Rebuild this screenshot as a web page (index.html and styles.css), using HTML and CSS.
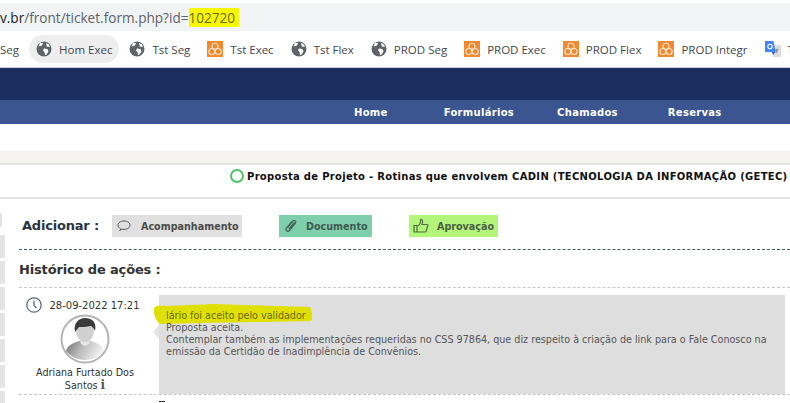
FILE: index.html
```html
<!DOCTYPE html>
<html lang="en">
<head>
  <meta charset="UTF-8">
  <title>Ticket 102720</title>
  <link rel="stylesheet" href="styles.css">
</head>
<body>
  <svg class="defs" width="0" height="0">
    <symbol id="globe" viewBox="0 0 16 16">
      <circle cx="8" cy="8" r="7.5" fill="#5f6368"/>
      <path d="M2.500 5.500 6 4.500l1-2.500-3-.2zM8 7.500l3.500.5 1 2.500-2 3-1.500.5-.5-3-1.500-1.500zM10 2l3 1.500.8 2.500-3-.5z" fill="#fff"/>
    </symbol>
    <symbol id="flower" viewBox="0 0 16 16">
      <rect width="16" height="16" fill="#ef8a32"/>
      <g fill="none" stroke="#fde3c8" stroke-width="1.100">
        <circle cx="8" cy="5.200" r="3"/>
        <circle cx="4.800" cy="10.500" r="3"/>
        <circle cx="11.200" cy="10.500" r="3"/>
      </g>
    </symbol>
  </svg>

  <div class="address-bar">
    <span class="url"><span class="url-host">v.br</span>/front/ticket.form.php?id=<span class="url-mark">102720&nbsp;</span></span>
  </div>

  <div class="bookmarks">
    <div class="bookmark bookmark-cut">Seg</div>
    <div class="bookmark bookmark-active"><svg class="fav"><use href="#globe"/></svg>Hom Exec</div>
    <div class="bookmark"><svg class="fav"><use href="#globe"/></svg>Tst Seg</div>
    <div class="bookmark"><svg class="fav"><use href="#flower"/></svg>Tst Exec</div>
    <div class="bookmark"><svg class="fav"><use href="#globe"/></svg>Tst Flex</div>
    <div class="bookmark"><svg class="fav"><use href="#globe"/></svg>PROD Seg</div>
    <div class="bookmark"><svg class="fav"><use href="#flower"/></svg>PROD Exec</div>
    <div class="bookmark"><svg class="fav"><use href="#flower"/></svg>PROD Flex</div>
    <div class="bookmark"><svg class="fav"><use href="#flower"/></svg>PROD Integr</div>
    <div class="bookmark">
      <svg class="fav" viewBox="0 0 16 16">
        <path d="M7 4h9v12H8z" fill="#dcdcdc"/>
        <path d="M9.500 8h4l-2 4.500z" fill="#8a8f96"/>
        <path d="M0 0h8.500l2 11H0z" fill="#4285f4"/>
        <path d="M7 11h3.500L8 14z" fill="#2a56c6"/>
        <circle cx="5" cy="5.500" r="2.200" fill="none" stroke="#fff" stroke-width="1.100"/>
      </svg>T
    </div>
  </div>

  <div class="brand-bar"></div>

  <nav class="site-nav">
    <a class="nav-home">Home</a>
    <a class="nav-forms">Formulários</a>
    <a class="nav-tickets">Chamados</a>
    <a>Reservas</a>
  </nav>

  <div class="band"></div>

  <div class="ticket-title">
    <span class="status-dot"></span>
    <span class="ticket-name">Proposta de Projeto - Rotinas que envolvem CADIN (TECNOLOGIA DA INFORMAÇÃO (GETEC)</span>
  </div>

  <div class="ticket-body">
    <div class="rail">
      <div class="rail-top"></div>
      <div class="rail-tab"></div>
      <div class="rail-tab"></div>
      <div class="rail-tab"></div>
      <div class="rail-tab"></div>
      <div class="rail-tab"></div>
      <div class="rail-tab"></div>
      <div class="rail-tab"></div>
    </div>

    <div class="ticket-main">
      <div class="add-row">
        <span class="add-label">Adicionar :</span>
        <a class="add-btn btn-followup">
          <svg class="btn-icon" viewBox="0 0 16 16">
            <path d="M3.500 12.500c.9-.5 1.200-1 1.300-1.500C3 10 2 8.700 2 7.200 2 4.800 4.600 3 8 3s6 1.800 6 4.200-2.600 4.200-6 4.200c-.8 0-1.500-.1-2.200-.3-.6.6-1.400 1.100-2.300 1.400z" fill="none" stroke="#555" stroke-width="1"/>
          </svg>
          Acompanhamento
        </a>
        <a class="add-btn btn-document">
          <svg class="btn-icon" viewBox="0 0 16 16">
            <path d="M4.500 9.500 10 3c1.200-1.400 3.600.3 2.500 2l-6 7.500c-1.700 2-4.700-.2-3.200-2.300L9 3.500M6 11l5.500-6.500" fill="none" stroke="#44695a" stroke-width="1.300"/>
          </svg>
          Documento
        </a>
        <a class="add-btn btn-approval">
          <svg class="btn-icon" viewBox="0 0 16 16">
            <path d="M1 7.500h3V14H1zM4 8c2 0 3.500-2.500 3.500-4.500S7.700 1 8.500 1.500c1.500.8 1 3.500.5 5h5c1 0 1.200 1.200.5 2l-1.500 5c-.3.5-.6.5-1 .5H4" fill="none" stroke="#4f6b45" stroke-width="1.200"/>
          </svg>
          Aprovação
        </a>
      </div>

      <h2 class="history-title">Histórico de ações :</h2>

      <div class="event">
        <div class="event-meta">
          <div class="event-date">
            <svg class="clock" viewBox="0 0 16 16">
              <circle cx="8" cy="8" r="7.200" fill="none" stroke="#5d6b7a" stroke-width="1.300"/>
              <path d="M8 3.500V8.500l2.500 2.500" fill="none" stroke="#5d6b7a" stroke-width="1.300"/>
            </svg>
            28-09-2022 17:21
          </div>
          <svg class="avatar" viewBox="0 0 50 50">
            <defs>
              <linearGradient id="shirt" x1="0" y1="0" x2="1" y2="0.300">
                <stop offset="0" stop-color="#6f6f6f"/>
                <stop offset="0.500" stop-color="#bdbdbd"/>
                <stop offset="1" stop-color="#f0f0f0"/>
              </linearGradient>
            </defs>
            <circle cx="25" cy="25" r="23.500" fill="#fff" stroke="#b4b4b4" stroke-width="2"/>
            <path d="M6 37c1-6 8-8 13-10h12c5 2 12 4 13 10-4 5-11 9-19 9S10 42 6 37z" fill="url(#shirt)"/>
            <path d="M20 26h10l-1 4-4 2-4-2z" fill="#e6e6e6"/>
            <ellipse cx="25" cy="17" rx="9" ry="11" fill="#d0d0d0"/>
            <path d="M15 18C13 9 19 4 25 4s12 3 10 13c-1-2-2-4-4-5-4 1-10 1-12 1-1 2-3 3-4 5z" fill="#3a3a3a"/>
          </svg>
          <div class="event-author">Adriana Furtado Dos<br>Santos <span class="info-icon">i</span></div>
        </div>
        <div class="event-content">
          <svg class="marker" viewBox="0 0 160 21">
            <path d="M1 5C3 2 8 2 14 3L60 1l60 2 37 1c2 4 3 10 1 14l-50 1-60 1-40 1C4 20 0 12 1 5z" fill="#e0e000"/>
          </svg>
          <div class="event-text">
            <div class="event-mark">lário foi aceito pelo validador</div>
            Proposta aceita.<br>
            Contemplar também as implementações requeridas no CSS 97864, que diz respeito à criação de link para o Fale Conosco na<br>
            emissão da Certidão de Inadimplência de Convênios.
          </div>
        </div>
      </div>
      <div class="next-event"><span class="next-tick"></span></div>
    </div>
  </div>
</body>
</html>
```

FILE: styles.css
```css
html, body {
  margin: 0;
  padding: 0;
  height: 403px;
  overflow: hidden;
  background: white;
}
body {
  font-family: "DejaVu Sans", sans-serif;
  font-size: 10px;
  color: #333;
}
.defs {
  display: block;
  height: 0;
}
.address-bar {
  margin-top: 3px;
  height: 28px;
  background: #f1f3f4;
  display: flex;
  align-items: center;
  font-family: "Open Sans", sans-serif;
  font-size: 13.6px;
  color: #5f6368;
  white-space: nowrap;
}
.url-host {
  color: #202124;
}
.url-mark {
  background: #f7f700;
  color: #6d6d14;
}
.bookmarks {
  height: 36px;
  display: flex;
  align-items: center;
  gap: 3px;
  font-family: "Open Sans", sans-serif;
  font-size: 11.5px;
  color: #44474c;
  white-space: nowrap;
  overflow: hidden;
  border-bottom: 1px solid #ccd0d6;
}
.bookmark {
  flex: none;
  display: flex;
  align-items: center;
  gap: 7px;
  height: 28px;
  padding: 0 7px;
  border-radius: 14px;
}
.bookmark-cut {
  width: 26px;
  padding: 0;
  box-sizing: border-box;
}
.bookmark-active {
  background: #eeeeef;
}
.fav {
  width: 16px;
  height: 16px;
  flex: none;
}
.brand-bar {
  height: 32px;
  background: #1c2d5f;
}
.site-nav {
  height: 24px;
  background: #3b5591;
  padding-left: 354px;
  display: flex;
  align-items: center;
  font-size: 10px;
  font-weight: bold;
  letter-spacing: 0.3px;
  color: white;
}
.nav-home { margin-right: 56px; }
.nav-forms { margin-right: 43px; }
.nav-tickets { margin-right: 50px; }
.band {
  margin-top: 27px;
  height: 12px;
  background: #f5f4f0;
  border-bottom: 2px solid #e4e4e4;
}
.ticket-title {
  height: 22px;
  padding: 0 0 10px 230px;
  display: flex;
  align-items: center;
  gap: 3px;
  border-bottom: 2px solid #e4e4e4;
  white-space: nowrap;
  font-size: 10px;
  font-weight: bold;
  letter-spacing: 0.3px;
  color: #111;
}
.status-dot {
  width: 10px;
  height: 10px;
  border: 2px solid #4cc46a;
  border-radius: 50%;
  flex: none;
}
.ticket-body {
  display: flex;
}
.rail {
  width: 5px;
  flex: none;
  padding-top: 14px;
  display: flex;
  flex-direction: column;
  gap: 3px;
}
.rail-top {
  width: 2px;
  height: 14px;
  margin-bottom: 5px;
  background: #e4e4e4;
  border-radius: 0 7px 7px 0;
}
.rail-tab {
  height: 23px;
  background: #e4e4e4;
}
.ticket-main {
  flex: 1;
  margin-left: 14px;
  min-width: 0;
}
.add-row {
  height: 51px;
  padding: 16px 0 0 3px;
  box-sizing: border-box;
  display: flex;
  align-items: flex-start;
  border-bottom: 1px dashed #46586e;
}
.add-label {
  width: 90px;
  line-height: 22px;
  font-size: 13px;
  font-weight: bold;
  letter-spacing: -0.2px;
  color: #2b3340;
}
.add-btn {
  height: 22px;
  display: flex;
  align-items: center;
  font-size: 9.6px;
  font-weight: bold;
  color: #4a4a4a;
  white-space: nowrap;
}
.btn-followup {
  width: 130px;
  margin-right: 37px;
  background: #e0e0e0;
}
.btn-document {
  width: 93px;
  margin-right: 37px;
  background: #80cfac;
  color: #3e5a50;
}
.btn-approval {
  width: 89px;
  background: #b3f57a;
  color: #4c5f46;
}
.btn-icon {
  width: 16px;
  height: 16px;
  margin: 0 9px 0 4px;
  flex: none;
}
.btn-document .btn-icon { margin-right: 7px; }
.btn-approval .btn-icon { margin-right: 8px; }
.history-title {
  margin: 0;
  height: 37px;
  line-height: 40px;
  font-size: 13px;
  font-weight: bold;
  letter-spacing: -0.15px;
  color: #333;
  border-bottom: 1px dashed #c8c8c8;
}
.event {
  height: 107px;
  padding-top: 7px;
  box-sizing: border-box;
  display: flex;
  border-bottom: 1px dashed #c8c8c8;
}
.event-meta {
  width: 132px;
  margin-right: 8px;
  flex: none;
  display: flex;
  flex-direction: column;
  align-items: center;
  text-align: center;
}
.event-date {
  display: flex;
  align-items: center;
  gap: 7px;
  margin-right: 4px;
  height: 18px;
  margin-top: 1px;
  white-space: nowrap;
}
.clock {
  width: 16px;
  height: 16px;
}
.avatar {
  width: 50px;
  height: 50px;
}
.event-author {
  margin-top: 3px;
  line-height: 12px;
  font-size: 9.6px;
  color: #333;
}
.info-icon {
  font-family: "DejaVu Serif", serif;
  font-weight: bold;
  font-size: 12px;
  line-height: 1;
  color: #555;
}
.event-content {
  position: relative;
  flex: 1;
  height: 99px;
  margin-right: 5px;
  background: #dedede;
  color: #555;
}
.event-content::before {
  content: "";
  position: absolute;
  left: -6px;
  top: 30px;
  border: 7px solid transparent;
  border-left: 0;
  border-right: 6px solid #e6e6e6;
}
.marker {
  position: absolute;
  left: -6px;
  top: 8px;
  width: 160px;
  height: 21px;
}
.event-text {
  position: relative;
  padding: 15px 0 0 7px;
  line-height: 12px;
  font-size: 9.6px;
  white-space: nowrap;
}
.event-mark {
  color: #6a6a10;
}
.next-tick {
  display: block;
  width: 6px;
  height: 1px;
  margin: 6px 0 0 140px;
  background: #333;
}
```
